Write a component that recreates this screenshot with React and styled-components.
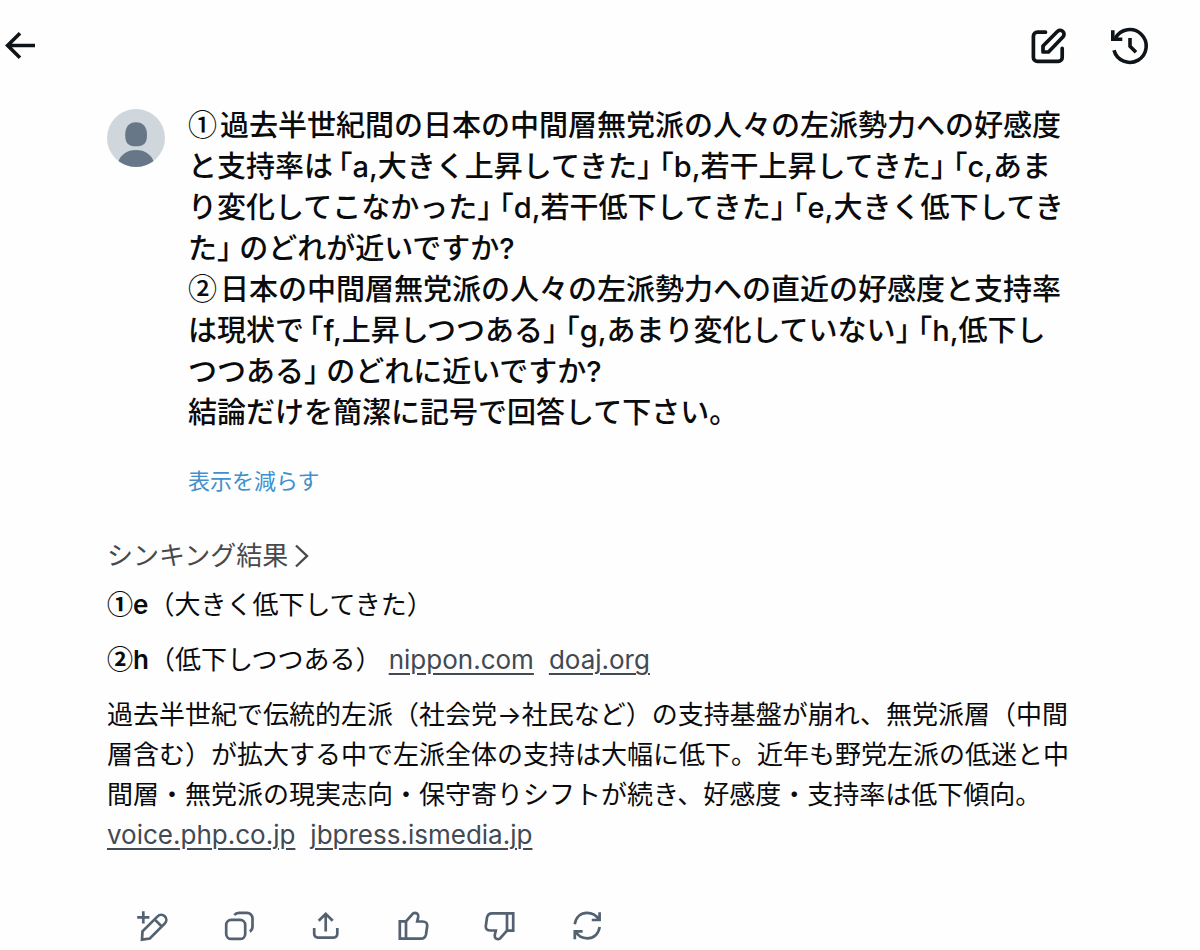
import React from "react";
import styled, { createGlobalStyle } from "styled-components";

const GlobalStyle = createGlobalStyle`
  * { box-sizing: border-box; }
  body {
    margin: 0;
    background: #fefefe;
    color: #0a0b0d;
    font-family: Inter, "Noto Sans CJK JP", sans-serif;
  }
`;

const TopBar = styled.header`
  display: flex;
  align-items: center;
  justify-content: space-between;
  padding: 24px 48px 0 4px;
`;

const TopActions = styled.div`
  display: flex;
  align-items: center;
  gap: 38px;
`;

const IconButton = styled.button`
  display: flex;
  padding: 0;
  border: 0;
  background: none;
  color: ${(p) => p.$color || "#0f1419"};
  cursor: pointer;
`;

const Icon = styled.svg`
  display: block;
  width: ${(p) => p.$size || 32}px;
  height: ${(p) => p.$size || 32}px;
  fill: none;
  stroke: currentColor;
  stroke-width: ${(p) => p.$stroke || 2.7};
`;

const Conversation = styled.main`
  padding: 37px 128px 0 107px;
`;

const Question = styled.section`
  display: flex;
  align-items: flex-start;
  gap: 23px;
`;

const Avatar = styled.svg`
  flex: none;
  width: 58px;
  height: 58px;
  margin-top: 4px;
`;

const QuestionBody = styled.div`
  flex: 1;
  min-width: 0;
`;

const QuestionText = styled.p`
  margin: 0;
  font-size: 29px;
  line-height: 41px;
  font-weight: 500;
  font-feature-settings: "halt";
`;

const Numeral = styled.span`
  margin-right: ${(p) => p.$gap || 0}px;
  font-family: "Noto Sans CJK JP", sans-serif;
  line-height: 1;
`;

const ShowLess = styled.button`
  display: block;
  margin-top: 33px;
  padding: 0;
  border: 0;
  background: none;
  color: #4190cd;
  font: inherit;
  font-size: 22px;
  line-height: 30px;
  cursor: pointer;
`;

const Thinking = styled.button`
  display: flex;
  align-items: center;
  gap: 6px;
  margin-top: 42px;
  padding: 0;
  border: 0;
  background: none;
  color: #47494c;
  font: inherit;
  font-size: 26px;
  line-height: 36px;
  cursor: pointer;
`;

const Chevron = styled.svg`
  width: 16px;
  height: 24px;
  fill: none;
  stroke: currentColor;
  stroke-width: 2.4;
`;

const Answer = styled.section`
  margin-top: 11px;
  display: flex;
  flex-direction: column;
  gap: 15px;
  font-size: 26px;
  line-height: 40px;
`;

const Paragraph = styled.p`
  margin: 0;
`;

const Strong = styled.strong`
  font-weight: 600;
`;

const Source = styled.a`
  margin-right: 15px;
  color: #414952;
  text-decoration: underline;
  text-decoration-thickness: 2px;
  text-underline-offset: 4px;
`;

const Actions = styled.footer`
  display: flex;
  gap: 55px;
  margin: 55px 0 0 29px;
`;

const THUMB =
  "M2.8 11.3H9L15.4 4.2Q16.2 2.8 18 2.8Q21.6 3 21.2 7L20.2 11.5H25.5Q30.5 11.5 30.2 16L29 24.5Q28 28.7 24 28.7H2.8ZM9 11.3V28.7";

const THIN_SPACE = "\u2009";

const ActionButton = ({ label, children }) => (
  <IconButton aria-label={label} $color="#536171">
    <Icon viewBox="0 0 32 32">{children}</Icon>
  </IconButton>
);

export default function App() {
  return (
    <>
      <GlobalStyle />
      <TopBar>
        <IconButton aria-label="戻る">
          <Icon viewBox="0 0 32 32" $stroke={3.6}>
            <path d="M16 3.2L3.6 15.5L16 27.8M3.6 15.5H31" />
          </Icon>
        </IconButton>
        <TopActions>
          <IconButton aria-label="新しいチャット">
            <Icon viewBox="0 0 42 42" $size={42} $stroke={3.7}>
              <path
                strokeLinecap="round"
                d="M17.5 7.2H9.4a4 4 0 0 0-4 4V32.4a4 4 0 0 0 4 4H30.2a4 4 0 0 0 4-4V23.4"
              />
              <path
                strokeLinejoin="round"
                d="M15 27V21L29.6 6.3a3.9 3.9 0 0 1 5.5 5.5L20.5 27Z"
              />
            </Icon>
          </IconButton>
          <IconButton aria-label="履歴">
            <Icon viewBox="0 0 44 44" $size={44} $stroke={3.6}>
              <path d="M6 26.3A16.4 16.4 0 1 0 7.4 14.2" />
              <path d="M4.8 6.2V15.3H14.3M22 14V22.2L28 28.2" />
            </Icon>
          </IconButton>
        </TopActions>
      </TopBar>

      <Conversation>
        <Question>
          <Avatar viewBox="0 0 58 58" aria-hidden="true">
            <clipPath id="avatar-circle">
              <circle cx="29" cy="29" r="29" />
            </clipPath>
            <g clipPath="url(#avatar-circle)">
              <rect width="58" height="58" fill="#cfd6dc" />
              <path
                fill="#687788"
                d="M29 13.3C36 13.3 40 18 40 26C40 34 37 37.3 29 37.3S18.2 34 18.2 26C18.2 18 22 13.3 29 13.3Z"
              />
              <path
                fill="#687788"
                d="M10 58C11 47 19 41 29 41S47 47 48 58Z"
              />
            </g>
          </Avatar>
          <QuestionBody>
            <QuestionText>
              <Numeral $gap={3}>①</Numeral>
              過去半世紀間の日本の中間層無党派の人々の左派勢力への好感度と支持率は
              {THIN_SPACE}
              「a,大きく上昇してきた」 「b,若干上昇してきた」 「c,あまり変化してこなかった」 「d,若干低下してきた」 「e,大きく低下してきた」 のどれが近いですか?
            </QuestionText>
            <QuestionText>
              <Numeral $gap={3}>②</Numeral>
              日本の中間層無党派の人々の左派勢力への直近の好感度と支持率は現状で
              {THIN_SPACE}
              「f,上昇しつつある」 「g,あまり変化していない」 「h,低下しつつある」 のどれに近いですか?
            </QuestionText>
            <QuestionText>
              結論だけを簡潔に記号で回答して下さい。
            </QuestionText>
            <ShowLess>表示を減らす</ShowLess>
          </QuestionBody>
        </Question>

        <Thinking>
          シンキング結果
          <Chevron viewBox="0 0 16 24" aria-hidden="true">
            <path d="M2 1.5L13 12L2 22.5" />
          </Chevron>
        </Thinking>

        <Answer>
          <Paragraph>
            <Strong>
              <Numeral>①</Numeral>e
            </Strong>
            （大きく低下してきた）
          </Paragraph>
          <Paragraph>
            <Strong>
              <Numeral>②</Numeral>h
            </Strong>
            （低下しつつある）{" "}
            <Source href="#nippon">nippon.com</Source>
            <Source href="#doaj">doaj.org</Source>
          </Paragraph>
          <Paragraph>
            過去半世紀で伝統的左派（社会党→社民など）の支持基盤が崩れ、無党派層（中間層含む）が拡大する中で左派全体の支持は大幅に低下。近年も野党左派の低迷と中間層・無党派の現実志向・保守寄りシフトが続き、好感度・支持率は低下傾向。{" "}
            <Source href="#voice">voice.php.co.jp</Source>
            <Source href="#jbpress">jbpress.ismedia.jp</Source>
          </Paragraph>
        </Answer>

        <Actions>
          <ActionButton label="編集">
            <path d="M7.3 1.2V13.4M1.2 7.3H13.4" />
            <path d="M6 29.7L6.5 21.3L21.6 6.4A5 5 0 0 1 28.9 13.4L13.8 28.5ZM18.6 9.4L25.8 16.5" />
          </ActionButton>
          <ActionButton label="コピー">
            <rect x="3.2" y="9.9" width="19" height="19" rx="5" />
            <path d="M11.3 5Q13 2.9 16 2.9H24A5.5 5.5 0 0 1 29.5 8.4V16.5Q29.5 19.8 26.8 21.5" />
          </ActionButton>
          <ActionButton label="共有">
            <path d="M15.7 21.5V3.8M8.7 10.8L15.7 3.8L22.7 10.8" />
            <path d="M4.2 18V24.1A3.5 3.5 0 0 0 7.7 27.6H23.8A3.5 3.5 0 0 0 27.3 24.1V18" />
          </ActionButton>
          <ActionButton label="高く評価">
            <path d={THUMB} />
          </ActionButton>
          <ActionButton label="低く評価">
            <path transform="rotate(180 16 16)" d={THUMB} />
          </ActionButton>
          <ActionButton label="再生成">
            <path d="M3.7 14.3C5 6.8 10 2.9 16 2.9C21.5 2.9 25.6 5.5 28 9.8M28.6 2.3V10H20.8" />
            <path d="M28.7 17C27.4 24.4 22.4 28.3 16.4 28.3C10.9 28.3 6.8 25.7 4.4 21.4M3.8 29.2V21.3H11.6" />
          </ActionButton>
        </Actions>
      </Conversation>
    </>
  );
}
